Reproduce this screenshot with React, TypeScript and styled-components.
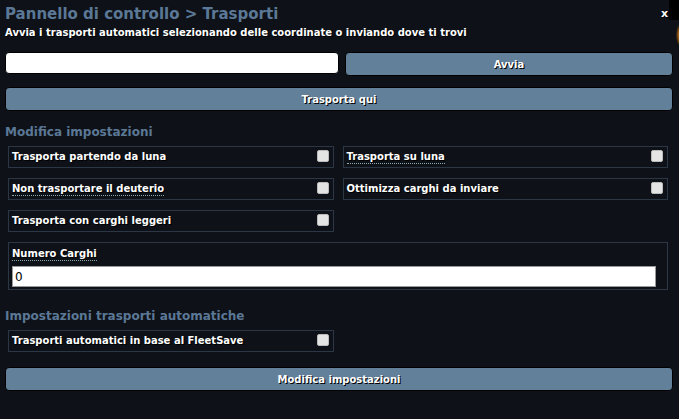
import React, { useState } from 'react';
import styled, { createGlobalStyle } from 'styled-components';

const GlobalStyle = createGlobalStyle`
  html, body {
    margin: 0;
    padding: 0;
    background: #0e1117;
  }
  body {
    font-family: 'DejaVu Sans', Verdana, sans-serif;
    color: #fff;
  }
`;

const Panel = styled.div`
  position: relative;
  width: 679px;
  height: 419px;
  box-sizing: border-box;
  padding: 4px 6px 0 5px;
  background: #0e1117;
  overflow: hidden;
`;

const Title = styled.h1`
  margin: 0;
  font-size: 15px;
  line-height: 21px;
  font-weight: bold;
  color: #5b7896;
`;

const Close = styled.span`
  position: absolute;
  top: 7px;
  right: 11px;
  font-size: 11px;
  font-weight: bold;
  color: #fff;
  text-shadow: 1px 1px 0 #000;
  cursor: pointer;
`;

const Corner = styled.div`
  position: absolute;
  top: 0;
  right: 0;
  width: 10px;
  height: 20px;
  background: #000;
`;

const Glow = styled.div`
  position: absolute;
  top: 24px;
  right: -6px;
  width: 9px;
  height: 22px;
  border-radius: 50%;
  background: radial-gradient(ellipse at center, #f0a020 0%, rgba(200, 110, 10, 0.6) 45%, rgba(0, 0, 0, 0) 75%);
`;

const Subtitle = styled.p`
  margin: 1px 0 0;
  font-size: 10px;
  line-height: 14px;
  font-weight: bold;
  text-shadow: 1px 1px 0 #000;
`;

const TopRow = styled.div`
  display: grid;
  grid-template-columns: 334px 1fr;
  gap: 6px;
  margin-top: 12px;
`;

const TextInput = styled.input`
  box-sizing: border-box;
  height: 22px;
  width: 100%;
  border: 1px solid #000;
  border-radius: 4px;
  background: #fff;
  padding: 0 4px;
  font-family: 'DejaVu Sans', sans-serif;
  font-size: 12px;
`;

const Button = styled.button<{ $mt?: number }>`
  box-sizing: border-box;
  display: block;
  width: 100%;
  height: 24px;
  margin-top: ${(p) => p.$mt ?? 0}px;
  background: #63809b;
  border: 1px solid #000;
  border-radius: 4px;
  color: #fff;
  font-family: 'DejaVu Sans', Verdana, sans-serif;
  font-size: 10px;
  font-weight: bold;
  text-shadow: 1px 1px 0 #000;
  cursor: pointer;
`;

const SectionTitle = styled.h2<{ $mt: number }>`
  margin: ${(p) => p.$mt}px 0 0;
  font-size: 12px;
  line-height: 16px;
  font-weight: bold;
  color: #5b7896;
`;

const Settings = styled.div`
  display: grid;
  grid-template-columns: 1fr 1fr;
  column-gap: 9px;
  row-gap: 10px;
  margin: 6px 5px 0 3px;
`;

const Option = styled.label`
  box-sizing: border-box;
  display: flex;
  align-items: center;
  justify-content: space-between;
  height: 22px;
  padding: 0 4px 0 3px;
  border: 1px solid #2b3744;
  cursor: pointer;
`;

const OptionText = styled.span<{ $tip?: boolean }>`
  font-size: 10px;
  font-weight: bold;
  text-shadow: 1px 1px 0 #000;
  border-bottom: ${(p) => (p.$tip ? '1px dotted #8aa' : '1px solid transparent')};
  line-height: 12px;
`;

const FieldLabel = styled(OptionText)`
  display: block;
  width: fit-content;
`;

const Check = styled.input.attrs({ type: 'checkbox' })`
  appearance: none;
  width: 12px;
  height: 12px;
  margin: 0 0 2px;
  border: 1px solid #bbb;
  border-radius: 2px;
  background: #e4e4e4;
  cursor: pointer;

  &:checked {
    background: #9fb6cc;
  }
`;

const NumberBox = styled.div`
  grid-column: 1 / -1;
  box-sizing: border-box;
  height: 48px;
  padding: 5px 11px 0 3px;
  border: 1px solid #2b3744;
`;

const NumberInput = styled.input`
  box-sizing: border-box;
  display: block;
  width: 100%;
  height: 21px;
  margin-top: 5px;
  border: 1px solid #999;
  background: #fff;
  padding: 0 2px;
  font-family: 'DejaVu Sans', sans-serif;
  font-size: 12px;
  color: #000;
`;

const SingleColumn = styled.div`
  display: grid;
  grid-template-columns: 1fr 1fr;
  column-gap: 9px;
  margin: 6px 5px 0 3px;
`;

type Opt = { key: string; label: string; tip?: boolean };

const options: Opt[] = [
  { key: 'moon', label: 'Trasporta partendo da luna' },
  { key: 'toMoon', label: 'Trasporta su luna', tip: true },
  { key: 'deut', label: 'Non trasportare il deuterio', tip: true },
  { key: 'optimize', label: 'Ottimizza carghi da inviare' },
  { key: 'light', label: 'Trasporta con carghi leggeri' },
];

const App: React.FC = () => {
  const [coords, setCoords] = useState('');
  const [cargo, setCargo] = useState('0');
  const [checked, setChecked] = useState<Record<string, boolean>>({});

  const toggle = (key: string) =>
    setChecked((prev) => ({ ...prev, [key]: !prev[key] }));

  return (
    <>
      <GlobalStyle />
      <Panel>
        <Corner />
        <Glow />
        <Close>x</Close>
        <Title>Pannello di controllo &gt; Trasporti</Title>
        <Subtitle>
          Avvia i trasporti automatici selezionando delle coordinate o inviando dove ti trovi
        </Subtitle>

        <TopRow>
          <TextInput value={coords} onChange={(e) => setCoords(e.target.value)} />
          <Button>Avvia</Button>
        </TopRow>
        <Button $mt={11}>Trasporta qui</Button>

        <SectionTitle $mt={13}>Modifica impostazioni</SectionTitle>
        <Settings>
          {options.map((o) => (
            <Option key={o.key}>
              <OptionText $tip={o.tip}>{o.label}</OptionText>
              <Check checked={!!checked[o.key]} onChange={() => toggle(o.key)} />
            </Option>
          ))}
          <NumberBox>
            <FieldLabel $tip>Numero Carghi</FieldLabel>
            <NumberInput value={cargo} onChange={(e) => setCargo(e.target.value)} />
          </NumberBox>
        </Settings>

        <SectionTitle $mt={18}>Impostazioni trasporti automatiche</SectionTitle>
        <SingleColumn>
          <Option>
            <OptionText>Trasporti automatici in base al FleetSave</OptionText>
            <Check checked={!!checked.fleet} onChange={() => toggle('fleet')} />
          </Option>
        </SingleColumn>

        <Button $mt={15}>Modifica impostazioni</Button>
      </Panel>
    </>
  );
};

export default App;
